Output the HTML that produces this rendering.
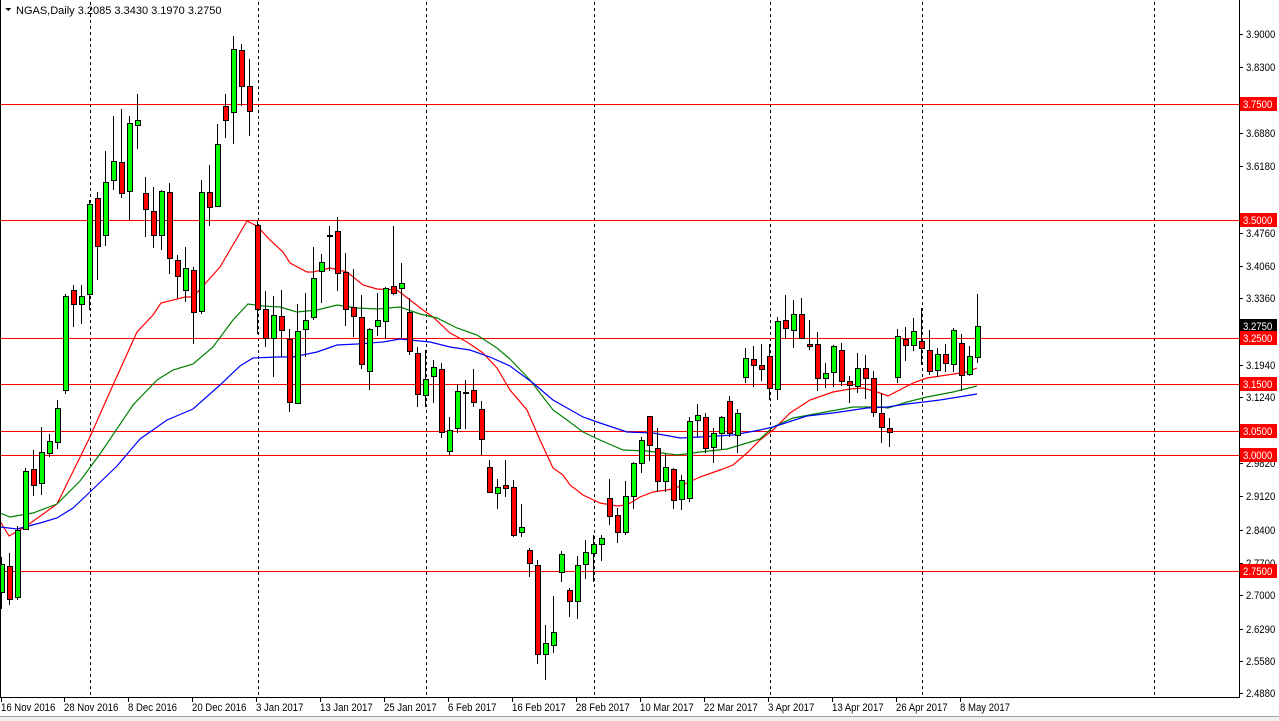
<!DOCTYPE html>
<html><head><meta charset="utf-8"><style>
html,body{margin:0;padding:0;background:#fff;}
svg{display:block;font-family:"Liberation Sans",sans-serif;}
</style></head><body>
<svg id="c" width="1279" height="721" xmlns="http://www.w3.org/2000/svg" shape-rendering="crispEdges">
<rect x="0" y="0" width="1279" height="721" fill="#fff"/>
<rect x="0" y="716" width="1279" height="5" fill="#f0f0f0"/>
<line x1="0" y1="716.5" x2="1279" y2="716.5" stroke="#a0a0a0"/>
<g id="grid" stroke="#000" stroke-dasharray="3,3">
<line x1="90.5" y1="2" x2="90.5" y2="697"/><line x1="258.5" y1="2" x2="258.5" y2="697"/>
<line x1="426.5" y1="2" x2="426.5" y2="697"/><line x1="594.5" y1="2" x2="594.5" y2="697"/>
<line x1="770.5" y1="2" x2="770.5" y2="697"/><line x1="922.5" y1="2" x2="922.5" y2="697"/>
<line x1="1154.5" y1="2" x2="1154.5" y2="697"/>
</g>
<g stroke="#f00">
<line x1="0" y1="104.5" x2="1239" y2="104.5"/><line x1="0" y1="220.5" x2="1239" y2="220.5"/>
<line x1="0" y1="338.5" x2="1239" y2="338.5"/><line x1="0" y1="384.5" x2="1239" y2="384.5"/>
<line x1="0" y1="431.5" x2="1239" y2="431.5"/><line x1="0" y1="455.5" x2="1239" y2="455.5"/>
<line x1="0" y1="571.5" x2="1239" y2="571.5"/>
</g>
<g id="ma" fill="none" shape-rendering="auto"></g>
<g id="cand"></g>
<line x1="0.5" y1="0" x2="0.5" y2="697" stroke="#000"/>
<line x1="1239.5" y1="0" x2="1239.5" y2="697" stroke="#000"/>
<line x1="0" y1="697.5" x2="1240" y2="697.5" stroke="#000"/>
<g class="sq" font-size="11" fill="#000">
<text x="1246" y="38">3.9000</text><text x="1246" y="71">3.8300</text>
<text x="1246" y="137">3.6880</text><text x="1246" y="170">3.6180</text>
<text x="1246" y="237">3.4760</text><text x="1246" y="270">3.4060</text>
<text x="1246" y="302">3.3360</text><text x="1246" y="369">3.1940</text>
<text x="1246" y="401">3.1240</text><text x="1246" y="467">2.9820</text>
<text x="1246" y="500">2.9120</text><text x="1246" y="534">2.8400</text>
<text x="1246" y="567">2.7700</text><text x="1246" y="599">2.7000</text>
<text x="1246" y="633">2.6290</text><text x="1246" y="665">2.5580</text>
<text x="1246" y="697">2.4880</text>
</g>
<g stroke="#000">
<line x1="1239" y1="34.5" x2="1243" y2="34.5"/><line x1="1239" y1="67.5" x2="1243" y2="67.5"/>
<line x1="1239" y1="133.5" x2="1243" y2="133.5"/><line x1="1239" y1="166.5" x2="1243" y2="166.5"/>
<line x1="1239" y1="233.5" x2="1243" y2="233.5"/><line x1="1239" y1="266.5" x2="1243" y2="266.5"/>
<line x1="1239" y1="298.5" x2="1243" y2="298.5"/><line x1="1239" y1="365.5" x2="1243" y2="365.5"/>
<line x1="1239" y1="397.5" x2="1243" y2="397.5"/><line x1="1239" y1="463.5" x2="1243" y2="463.5"/>
<line x1="1239" y1="496.5" x2="1243" y2="496.5"/><line x1="1239" y1="530.5" x2="1243" y2="530.5"/>
<line x1="1239" y1="563.5" x2="1243" y2="563.5"/><line x1="1239" y1="595.5" x2="1243" y2="595.5"/>
<line x1="1239" y1="629.5" x2="1243" y2="629.5"/><line x1="1239" y1="661.5" x2="1243" y2="661.5"/>
<line x1="1239" y1="693.5" x2="1243" y2="693.5"/>
</g>
<g class="sq" font-size="11" fill="#fff">
<rect x="1240" y="97" width="37" height="14" fill="#f00"/><text x="1243" y="108">3.7500</text>
<rect x="1240" y="213" width="37" height="14" fill="#f00"/><text x="1243" y="224">3.5000</text>
<rect x="1240" y="319" width="37" height="14" fill="#000"/><text x="1243" y="330">3.2750</text>
<rect x="1240" y="331" width="37" height="14" fill="#f00"/><text x="1243" y="342">3.2500</text>
<rect x="1240" y="377" width="37" height="14" fill="#f00"/><text x="1243" y="388">3.1500</text>
<rect x="1240" y="424" width="37" height="14" fill="#f00"/><text x="1243" y="435">3.0500</text>
<rect x="1240" y="448" width="37" height="14" fill="#f00"/><text x="1243" y="459">3.0000</text>
<rect x="1240" y="564" width="37" height="14" fill="#f00"/><text x="1243" y="575">2.7500</text>
</g>
<g stroke="#000">
<line x1="1.5" y1="697" x2="1.5" y2="702"/><line x1="64.5" y1="697" x2="64.5" y2="702"/>
<line x1="128.5" y1="697" x2="128.5" y2="702"/><line x1="192.5" y1="697" x2="192.5" y2="702"/>
<line x1="256.5" y1="697" x2="256.5" y2="702"/><line x1="320.5" y1="697" x2="320.5" y2="702"/>
<line x1="384.5" y1="697" x2="384.5" y2="702"/><line x1="448.5" y1="697" x2="448.5" y2="702"/>
<line x1="512.5" y1="697" x2="512.5" y2="702"/><line x1="576.5" y1="697" x2="576.5" y2="702"/>
<line x1="640.5" y1="697" x2="640.5" y2="702"/><line x1="704.5" y1="697" x2="704.5" y2="702"/>
<line x1="768.5" y1="697" x2="768.5" y2="702"/><line x1="832.5" y1="697" x2="832.5" y2="702"/>
<line x1="896.5" y1="697" x2="896.5" y2="702"/><line x1="960.5" y1="697" x2="960.5" y2="702"/>
</g>
<g class="sq" font-size="11" fill="#000">
<text x="1" y="711">16 Nov 2016</text><text x="64" y="711">28 Nov 2016</text>
<text x="128" y="711">8 Dec 2016</text><text x="192" y="711">20 Dec 2016</text>
<text x="256" y="711">3 Jan 2017</text><text x="320" y="711">13 Jan 2017</text>
<text x="384" y="711">25 Jan 2017</text><text x="448" y="711">6 Feb 2017</text>
<text x="512" y="711">16 Feb 2017</text><text x="576" y="711">28 Feb 2017</text>
<text x="640" y="711">10 Mar 2017</text><text x="704" y="711">22 Mar 2017</text>
<text x="768" y="711">3 Apr 2017</text><text x="832" y="711">13 Apr 2017</text>
<text x="896" y="711">26 Apr 2017</text><text x="960" y="711">8 May 2017</text>
</g>
<polygon points="5,8 11,8 8,11" fill="#000"/>
<text x="16" y="14" font-size="11" fill="#000">NGAS,Daily  3.2085 3.3430 3.1970 3.2750</text>
</svg>
<script>
var C=[
['G',564,592,557,609],['R',566,599,553,605],['G',530,597,526,600],['G',471,529,468,529],['R',469,485,450,496],
['G',452,483,427,495],['G',441,453,434,457],['G',408,442,400,449],['G',296,390,294,394],['R',290,304,285,327],
['G',296,304,285,324],['G',204,294,200,310],['R',198,246,192,280],['G',182,235,151,246],['G',161,180,116,190],
['R',162,193,109,198],['G',123,191,116,220],['G',120,125,94,149],['R',193,209,177,237],['R',211,235,187,248],
['G',191,235,190,250],['R',192,258,183,274],['R',260,276,255,298],['G',268,290,247,302],['R',270,312,267,344],
['G',192,311,180,314],['R',192,207,165,226],['G',144,206,124,207],['R',106,120,94,138],['G',49,112,36,144],
['R',50,86,44,106],['R',86,111,59,136],['R',225,309,221,334],['R',309,338,291,347],['G',315,338,296,377],
['R',316,330,290,357],['R',339,402,329,412],['G',331,403,304,404],['G',320,329,293,357],['G',278,317,247,320],
['G',262,271,254,303],['G',235,236,226,271],['R',231,273,217,291],['R',272,309,253,326],['R',307,316,269,337],
['R',317,364,295,369],['G',329,371,328,390],['G',320,326,293,336],['G',288,321,287,339],['R',286,293,226,295],
['G',283,288,263,338],['R',312,351,298,355],['R',353,394,347,407],['G',379,395,350,407],['G',367,376,360,403],
['R',369,432,363,438],['G',430,451,417,455],['G',391,428,384,433],['G',392,393,380,429],['R',390,402,369,407],
['R',409,439,401,455],['R',467,492,460,493],['G',487,493,479,509],['R',485,488,460,497],['R',487,535,480,537],
['G',527,532,504,537],['R',550,563,548,577],['R',565,654,560,664],['G',643,654,625,680],['G',632,645,596,653],
['G',554,572,551,582],['R',590,601,588,617],['G',565,601,556,619],['G',552,564,540,579],['G',544,553,535,582],
['G',538,544,535,561],['R',498,516,479,525],['R',515,532,508,543],['G',496,532,481,535],['G',463,496,462,509],
['G',440,463,437,473],['R',416,445,416,461],['R',448,481,428,492],['G',467,481,454,492],['R',469,500,468,509],
['G',480,499,475,510],['G',421,498,417,502],['G',415,420,404,437],['R',417,448,413,453],['G',433,447,428,463],
['G',417,433,416,450],['R',401,433,396,437],['G',413,435,409,453],['G',358,377,348,383],['R',359,365,346,387],
['R',365,369,344,381],['R',356,388,344,400],['G',321,389,317,400],['R',320,328,295,339],['G',314,330,300,348],
['R',314,338,298,339],['R',344,346,320,350],['R',344,378,332,391],['G',373,378,363,388],['G',346,372,345,387],
['R',350,381,343,386],['R',381,385,376,403],['G',368,386,353,393],['R',368,378,355,399],['R',378,412,371,417],
['R',413,427,393,443],['R',428,432,418,447],['G',336,377,329,383],['R',339,345,327,361],['G',331,345,318,351],
['R',341,348,308,365],['R',350,371,330,375],['G',354,370,348,377],['R',354,363,344,372],['G',330,364,328,372],
['R',343,375,334,391],['G',356,374,346,376],['G',326,357,294,363]];
var ns='http://www.w3.org/2000/svg',g=document.getElementById('cand');
C.forEach(function(c,k){var x=1+8*k;
var l=document.createElementNS(ns,'line');l.setAttribute('x1',x+.5);l.setAttribute('x2',x+.5);
l.setAttribute('y1',c[3]);l.setAttribute('y2',c[4]);l.setAttribute('stroke','#000');g.appendChild(l);
var r=document.createElementNS(ns,'rect');r.setAttribute('x',x-2+.5);r.setAttribute('y',c[1]+.5);
r.setAttribute('width',5);r.setAttribute('height',Math.max(1,c[2]-c[1]));
r.setAttribute('fill',c[0]=='G'?'#00ff00':'#ff0000');r.setAttribute('stroke','#000');g.appendChild(r);});
var M={ '#ff0000':'0,521 9,536 25,527 57,504 89,439 113,385 137,332 153,315 161,303 185,297 193,297 203,286 220,267 247,221 257,226 270,240 283,252 290,263 307,272 313,272 330,268 347,272 363,285 377,289 397,290 410,300 423,310 433,317 450,333 467,342 483,353 497,368 510,390 527,410 540,440 553,468 563,475 570,485 583,495 600,503 617,506 627,505 640,497 653,492 673,489 687,483 700,477 720,470 733,465 747,453 760,440 773,430 790,413 810,400 833,392 850,389 863,388 877,392 888,396 913,383 927,378 947,375 967,372 977,368',
'#008000':'0,513 10,517 33,513 57,504 80,481 100,454 133,405 157,380 173,370 193,364 213,347 233,320 248,304 263,306 280,307 297,312 317,310 337,305 357,308 377,309 400,307 420,314 437,318 457,328 477,335 497,348 510,359 530,380 553,410 567,420 583,432 600,440 623,450 647,451 677,455 700,452 727,449 747,443 760,439 773,427 793,418 820,413 853,407 880,407 888,408 907,402 927,397 953,392 977,386',
'#0000ff':'0,527 17,529 40,523 57,518 73,508 90,492 117,466 140,439 167,420 193,409 220,385 240,366 253,358 277,357 293,357 317,352 337,345 357,344 383,342 400,339 430,342 450,347 470,350 490,357 510,366 533,383 553,400 583,417 600,423 627,432 653,433 680,438 700,437 733,435 760,430 773,427 807,416 833,413 867,408 887,407 907,404 940,400 977,394'};
var mg=document.getElementById('ma');
for(var col in M){var p=document.createElementNS(ns,'polyline');p.setAttribute('points',M[col]);
p.setAttribute('stroke',col);p.setAttribute('stroke-width','1.2');mg.appendChild(p);}
document.querySelectorAll('.sq text').forEach(function(t){var w=t.getComputedTextLength();
t.setAttribute('textLength',(w*0.87).toFixed(1));t.setAttribute('lengthAdjust','spacingAndGlyphs');});
</script>
</body></html>
